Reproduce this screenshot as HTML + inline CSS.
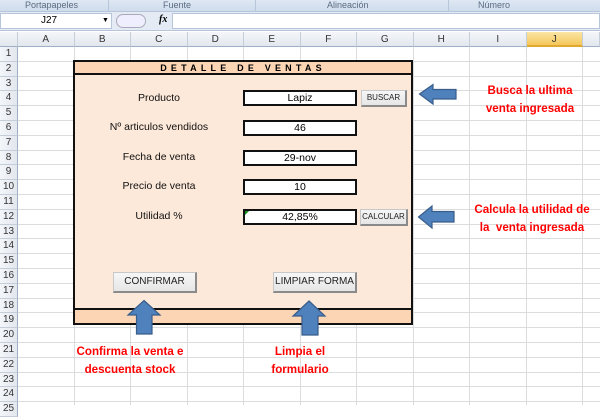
<!DOCTYPE html>
<html><head><meta charset="utf-8"><style>
*{margin:0;padding:0;box-sizing:border-box}
body{width:600px;height:405px;overflow:hidden;background:#fff;font-family:"Liberation Sans",sans-serif;position:relative}
.a{position:absolute}
.rib{left:0;top:0;width:600px;height:12px;background:linear-gradient(#dfe8f4,#cfdcec);border-bottom:1px solid #b6c5d9;font-size:9px;color:#5a6b80}
.fb{left:0;top:12px;width:600px;height:19px;background:#e4ebf4;border-bottom:1px solid #b6c5d9}
.colh{top:32px;height:15px;background:linear-gradient(#f4f6f9,#e2e7ee);border-right:1px solid #c5cdd8;border-bottom:1px solid #9eb0c6;font-size:10px;color:#333;text-align:center;line-height:15px}
.rowh{left:0;width:18px;background:linear-gradient(90deg,#f4f6f9,#e2e7ee);border-bottom:1px solid #c5cdd8;border-right:1px solid #9eb0c6;font-size:10px;color:#333;text-align:center}
.lbl{font-size:10.5px;color:#111;text-align:center;width:170px;left:74px}
.in{left:243px;width:114px;height:16px;background:#fff;border:2px solid #111;font-size:10.5px;text-align:center;line-height:12px}
.btn{background:linear-gradient(#f6f6f6,#e6e6e6);border:1px solid #c8c8c8;border-right:2px solid #8a8a8a;border-bottom:2px solid #8a8a8a;text-align:center;color:#222}
.red{color:#f00;font-weight:bold;font-size:11.6px;text-align:center;line-height:18px}
</style></head><body>
<div class="a rib">
<span class="a" style="left:25px;top:0">Portapapeles</span>
<span class="a" style="left:163px;top:0">Fuente</span>
<span class="a" style="left:327px;top:0">Alineación</span>
<span class="a" style="left:478px;top:0">Número</span>
<div class="a" style="left:108px;top:0;width:1px;height:12px;background:#b6c5d9"></div>
<div class="a" style="left:255px;top:0;width:1px;height:12px;background:#b6c5d9"></div>
<div class="a" style="left:448px;top:0;width:1px;height:12px;background:#b6c5d9"></div>
</div>
<div class="a fb">
<div class="a" style="left:0;top:1px;width:112px;height:16px;background:#fff;border:1px solid #b6c5d9;font-size:10px;line-height:14px;padding-left:40px">J27<span class="a" style="left:101px;top:0;font-size:7px">▼</span></div>
<div class="a" style="left:116px;top:2px;width:30px;height:14px;border:1px solid #aab;border-radius:8px;background:#eef"></div>
<div class="a" style="left:159px;top:2px;font-size:10px;font-style:italic;font-family:'Liberation Serif',serif;font-weight:bold">fx</div>
<div class="a" style="left:172px;top:1px;width:428px;height:16px;background:#fff;border:1px solid #b6c5d9"></div>
</div>
<div class="a colh" style="left:0;width:18px"></div>
<div id="cols"></div>
<svg class="a" style="left:0;top:0" width="600" height="405">
<g stroke="#dadcdd" stroke-width="1" id="grid"></g>
</svg>
<script>
var cols="ABCDEFGHIJ",h="";
for(var i=0;i<10;i++){var x=18+i*56.5;h+='<div class="a colh" style="left:'+x+'px;width:56.5px;'+(i==9?'background:linear-gradient(#fbe6a5,#f4c75a);border-bottom:2px solid #e0a830':'')+'">'+cols[i]+'</div>';}
h+='<div class="a colh" style="left:583px;width:17px"></div>';
for(var r=1;r<=25;r++){var y=47+(r-1)*14.8;h+='<div class="a rowh" style="top:'+y+'px;height:14.8px;line-height:14.8px">'+r+'</div>';}
document.getElementById('cols').innerHTML=h;
var g="";
for(var r=1;r<=25;r++){var y=Math.round(47+r*14.8)-0.5;g+='<line x1="18" x2="600" y1="'+y+'" y2="'+y+'"/>';}
for(var i=1;i<=10;i++){var x=Math.round(18+i*56.5)-0.5;g+='<line x1="'+x+'" x2="'+x+'" y1="47" y2="405"/>';}
document.getElementById('grid').innerHTML=g;
</script>
<div class="a" style="left:73px;top:60px;width:340px;height:265px;border:2px solid #111;background:#fde9d9"></div>
<div class="a" style="left:75px;top:62px;width:336px;height:13px;background:#fcd5b4;border-bottom:2px solid #111;font-size:9px;font-weight:bold;letter-spacing:4.2px;text-align:center;line-height:13px">DETALLE DE VENTAS</div>
<div class="a" style="left:75px;top:308px;width:336px;height:15px;background:#fcd5b4;border-top:2px solid #111"></div>
<div class="a lbl" style="top:92px">Producto</div>
<div class="a lbl" style="top:121px">Nº articulos vendidos</div>
<div class="a lbl" style="top:151px">Fecha de venta</div>
<div class="a lbl" style="top:180px">Precio de venta</div>
<div class="a lbl" style="top:210px">Utilidad %</div>
<div class="a in" style="top:90px">Lapiz</div>
<div class="a in" style="top:120px">46</div>
<div class="a in" style="top:150px">29-nov</div>
<div class="a in" style="top:179px">10</div>
<div class="a in" style="top:209px">42,85%<div class="a" style="left:0;top:0;width:0;height:0;border-top:4px solid #1a8a1a;border-right:4px solid transparent"></div></div>
<div class="a btn" style="left:361px;top:90px;width:46px;height:17px;font-size:8px;line-height:14px">BUSCAR</div>
<div class="a btn" style="left:360px;top:209px;width:48px;height:17px;font-size:8px;line-height:14px">CALCULAR</div>
<div class="a btn" style="left:113px;top:272px;width:84px;height:21px;font-size:10px;line-height:18px">CONFIRMAR</div>
<div class="a btn" style="left:273px;top:272px;width:84px;height:21px;font-size:10px;line-height:18px">LIMPIAR FORMA</div>
<svg class="a" style="left:0;top:0" width="600" height="405">
<g fill="#4f81bd" stroke="#385d8a" stroke-width="1.2">
<path d="M419.5 94 L433 84.5 L433 89.5 L456 89.5 L456 99 L433 99 L433 104 Z"/>
<path d="M418.5 217 L432 206 L432 211.5 L454 211.5 L454 222 L432 222 L432 228 Z"/>
<path d="M144 300.5 L160 315 L152 315 L152 334 L136.5 334 L136.5 315 L128 315 Z"/>
<path d="M309 301 L325 316 L318 316 L318 335 L302 335 L302 316 L293 316 Z"/>
</g></svg>
<div class="a red" style="left:470px;top:82px;width:120px">Busca la ultima<br>venta ingresada</div>
<div class="a red" style="left:462px;top:201px;width:140px">Calcula la utilidad de<br>la &nbsp;venta ingresada</div>
<div class="a red" style="left:65px;top:343px;width:130px">Confirma la venta e<br>descuenta stock</div>
<div class="a red" style="left:250px;top:343px;width:100px">Limpia el<br>formulario</div>
</body></html>
